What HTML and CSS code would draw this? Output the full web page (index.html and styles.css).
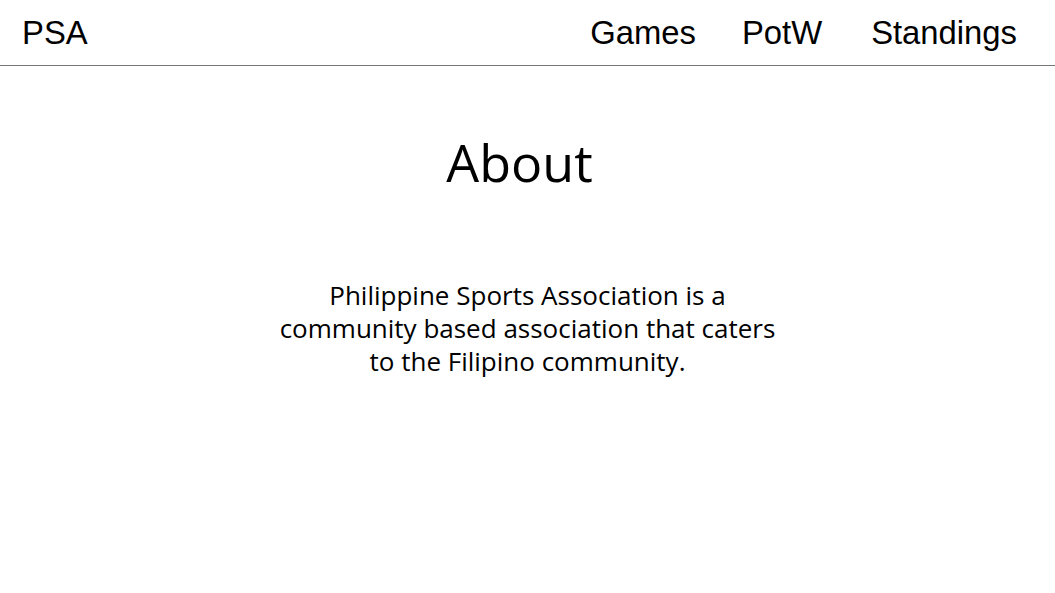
FILE: index.html
```html
<!DOCTYPE html>
<html lang="en">
<head>
<meta charset="utf-8">
<title>PSA - About</title>
<link rel="stylesheet" href="styles.css">
</head>
<body>
<header class="topbar">
  <a class="brand" href="#">PSA</a>
  <nav class="nav">
    <a class="nav-link" href="#">Games</a>
    <a class="nav-link" href="#">PotW</a>
    <a class="nav-link" href="#">Standings</a>
  </nav>
</header>
<main class="about">
  <h1 class="about-title">About</h1>
  <p class="about-text">Philippine Sports Association is a community based association that caters to the Filipino community.</p>
</main>
</body>
</html>
```

FILE: styles.css
```css
html, body {
  margin: 0;
  padding: 0;
  background: #ffffff;
  color: #000000;
}

.topbar {
  display: flex;
  align-items: center;
  justify-content: space-between;
  height: 65px;
  border-bottom: 1px solid #777777;
  padding: 0 38px 0 22px;
  font-family: "Liberation Sans", Arial, sans-serif;
  font-size: 32.8px;
}

.brand,
.nav-link {
  color: #000000;
  text-decoration: none;
  line-height: 37px;
}

.nav {
  display: flex;
  gap: 46px;
}

.nav-link:last-child {
  margin-left: 3px;
}

.about {
  display: flex;
  flex-direction: column;
  align-items: center;
  font-family: "Open Sans", "Noto Sans", sans-serif;
}

.about-title {
  margin: 60px 16px 0 0;
  font-weight: 400;
  font-size: 52px;
  line-height: 72px;
}

.about-text {
  margin: 81px 0 0;
  width: 510px;
  text-align: center;
  font-size: 26px;
  line-height: 33px;
}
```
